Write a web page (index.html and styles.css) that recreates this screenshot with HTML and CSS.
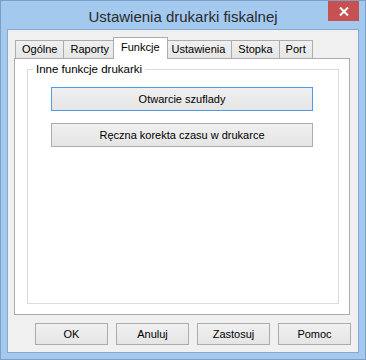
FILE: index.html
```html
<!DOCTYPE html>
<html lang="pl">

<head>
    <meta charset="UTF-8">
    <title>Ustawienia drukarki fiskalnej</title>
    <link rel="stylesheet" href="styles.css">
</head>

<body>
    <div class="window">
        <div class="titlebar">
            <span class="title">Ustawienia drukarki fiskalnej</span>
            <button class="close" title="Zamknij">
                <svg width="10" height="9" viewBox="0 0 10 9">
                    <path d="M1 0.5 L9 8.5 M9 0.5 L1 8.5" stroke="#fff" stroke-width="2" />
                </svg>
            </button>
        </div>

        <div class="client">
            <div class="tabs">
                <div class="tab">Ogólne</div>
                <div class="tab">Raporty</div>
                <div class="tab active">Funkcje</div>
                <div class="tab">Ustawienia</div>
                <div class="tab">Stopka</div>
                <div class="tab">Port</div>
            </div>

            <div class="panel">
                <fieldset class="group">
                    <legend>Inne funkcje drukarki</legend>
                    <div class="group-buttons">
                        <button class="btn wide focused">Otwarcie szuflady</button>
                        <button class="btn wide">Ręczna korekta czasu w drukarce</button>
                    </div>
                </fieldset>
            </div>

            <div class="actions">
                <button class="btn">OK</button>
                <button class="btn">Anuluj</button>
                <button class="btn">Zastosuj</button>
                <button class="btn">Pomoc</button>
            </div>
        </div>
    </div>
</body>

</html>
```

FILE: styles.css
```css
* {
    box-sizing: border-box;
    margin: 0;
    padding: 0;
}

body {
    background-color: #ffffff;
    font-family: 'Liberation Sans', Arial, sans-serif;
    font-size: 11px;
    color: #000;
}

.window {
    position: relative;
    width: 366px;
    height: 360px;
    background-color: #a3c9ef;
    border: 1px solid #7c9fc6;
    padding: 0 6px 6px 6px;
    display: flex;
    flex-direction: column;
}

.titlebar {
    height: 28px;
    display: flex;
    align-items: center;
    justify-content: center;
}

.title {
    font-size: 15px;
    color: #2a2a2a;
    margin-top: 2px;
}

.close {
    position: absolute;
    top: 0;
    right: 6px;
    width: 31px;
    height: 20px;
    border: none;
    background-color: #c75050;
    display: flex;
    align-items: center;
    justify-content: center;
}

.client {
    height: 324px;
    background-color: #f0f0f0;
    border: 1px solid #86a9cd;
    display: flex;
    flex-direction: column;
}

/* zakładki */
.tabs {
    display: flex;
    align-items: flex-end;
    height: 21px;
    margin-top: 7px;
    margin-left: 7px;
}

.tab {
    height: 18px;
    line-height: 17px;
    padding: 0 6px;
    border: 1px solid #acacac;
    border-bottom: none;
    margin-left: -1px;
    background: linear-gradient(#f0f0f0, #e5e5e5);
}

.tab:first-child {
    margin-left: 0;
}

.tab.active {
    position: relative;
    z-index: 1;
    height: 22px;
    line-height: 18px;
    margin: 0 -2px -1px -3px;
    padding: 0 7px;
    background: #ffffff;
}

.panel {
    width: 336px;
    height: 257px;
    margin-left: 6px;
    background-color: #ffffff;
    border: 1px solid #acacac;
    display: flex;
    flex-direction: column;
}

.group {
    flex: 1;
    margin: 4px 10px 10px 12px;
    padding: 0;
    border: 1px solid #dcdcdc;
}

.group legend {
    margin-left: 5px;
    padding: 0 3px;
    line-height: 13px;
    font-size: 11.5px;
}

.group-buttons {
    display: flex;
    flex-direction: column;
    gap: 12px;
    padding: 11px 0 0 23px;
}

/* przyciski */
.btn {
    font-family: 'Liberation Sans', Arial, sans-serif;
    font-size: 11px;
    color: #000;
    height: 22px;
    width: 73px;
    border: 1px solid #acacac;
    background: linear-gradient(#f0f0f0, #e5e5e5);
}

.btn.wide {
    width: 262px;
    height: 24px;
}

.btn.focused {
    border-color: #4b9ce9;
}

.actions {
    display: flex;
    gap: 8px;
    margin-top: 8px;
    margin-left: 27px;
}
```
